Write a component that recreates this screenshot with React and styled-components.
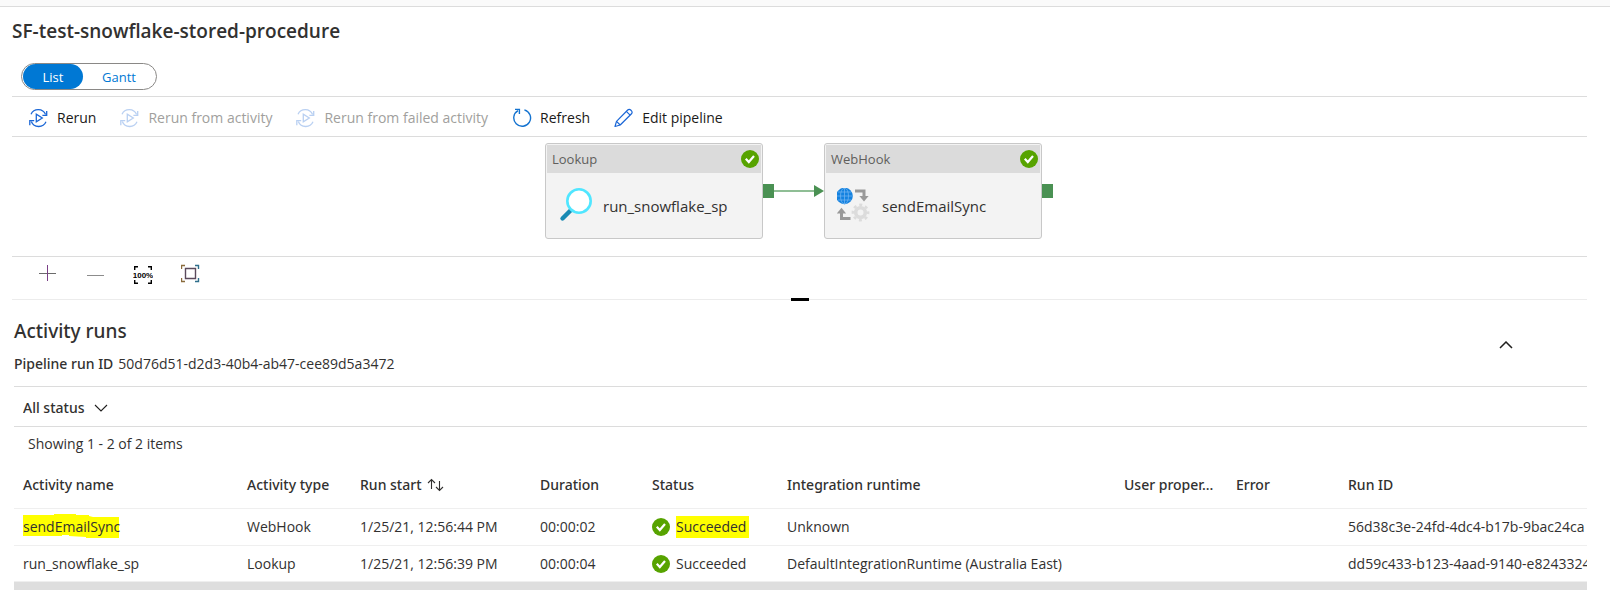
import React from "react";
import styled, { createGlobalStyle } from "styled-components";

const Global = createGlobalStyle`
  *, *::before, *::after { box-sizing: border-box; }
  body {
    margin: 0;
    background: #fff;
    color: #323130;
    font: 14px/20px "Open Sans", "Noto Sans", sans-serif;
  }
  button, select { font: inherit; color: inherit; }
  svg { display: block; flex: none; }
`;

const mediumFont = `
  font-family: "Noto Sans", "Open Sans", sans-serif;
  font-weight: 500;
`;

const TopStrip = styled.div`
  height: 7px;
  background: #fafafa;
  border-bottom: 1px solid #dcdcdc;
`;

const Page = styled.main`
  padding: 0 23px 0 12px;
`;

const Title = styled.h1`
  margin: 0;
  padding: 10px 0 18px;
  font-size: 19px;
  line-height: 28px;
  font-weight: 600;
`;

const ViewSwitch = styled.div`
  display: flex;
  width: 136px;
  height: 27px;
  margin: 0 0 6px 9px;
  padding: 0 1px;
  border: 1px solid #8a8886;
  border-radius: 14px;
`;

const ViewButton = styled.button`
  width: ${(p) => (p.$active ? 60 : 72)}px;
  padding: 0;
  border: 0;
  border-radius: 13px;
  font-size: 13px;
  background: ${(p) => (p.$active ? "#0078d4" : "transparent")};
  color: ${(p) => (p.$active ? "#fff" : "#0078d4")};
`;

const Toolbar = styled.div`
  display: flex;
  align-items: center;
  gap: 24px;
  height: 41px;
  padding: 2px 0 0 17px;
  border: solid #dcdcdc;
  border-width: 1px 0;
`;

const ToolButton = styled.button`
  display: flex;
  align-items: center;
  gap: 8px;
  padding: 0;
  border: 0;
  background: none;
  color: #1b1a19;
  white-space: nowrap;
  &:disabled { color: #a19f9d; }
  &:disabled svg { opacity: 0.3; }
`;

const Canvas = styled.section`
  display: flex;
  justify-content: center;
  align-items: flex-start;
  height: 119px;
  padding: 6px 1px 0 0;
`;

const Node = styled.article`
  width: 218px;
  height: 96px;
  padding: 1px;
  border: 1px solid #c8c8c8;
  border-radius: 3px;
  background: #f3f3f3;
`;

const NodeHeader = styled.header`
  display: flex;
  align-items: center;
  justify-content: space-between;
  height: 28px;
  padding: 0 2px 0 5px;
  background: #dbdbdb;
  color: #605e5c;
  font-size: 13px;
`;

const NodeBody = styled.div`
  display: flex;
  align-items: center;
  gap: 9px;
  height: 64px;
  padding: 2px 0 0 11px;
  font-size: 15px;
`;

const Port = styled.span`
  width: 11px;
  height: 14px;
  margin-top: 41px;
  background: #4a9153;
`;

const Arrow = styled.svg`
  margin-top: 41px;
`;

const ZoomBar = styled.div`
  position: relative;
  display: flex;
  gap: 28px;
  height: 44px;
  padding: 7px 0 0 25px;
  border: solid #dcdcdc;
  border-width: 1px 0;
  border-bottom-color: #ececec;
`;

const ZoomButton = styled.button`
  width: 20px;
  height: 20px;
  padding: 0;
  border: 0;
  background: none;
`;

const SplitHandle = styled.span`
  position: absolute;
  left: 50%;
  bottom: -2px;
  width: 18px;
  height: 3px;
  margin-left: -9px;
  background: #000;
`;

const Runs = styled.section`
  padding-left: 2px;
`;

const RunsHeader = styled.div`
  display: flex;
  justify-content: space-between;
  align-items: center;
  height: 87px;
  padding: 4px 74px 0 0;
  border-bottom: 1px solid #dcdcdc;
`;

const RunsTitle = styled.h2`
  ${mediumFont}
  margin: 0;
  font-size: 19px;
  line-height: 28px;
`;

const RunIdLine = styled.dl`
  display: flex;
  gap: 5px;
  margin: 9px 0 0;
  dt { ${mediumFont} }
  dd { margin: 0; }
`;

const IconButton = styled.button`
  padding: 0;
  border: 0;
  background: none;
`;

const FilterBar = styled.div`
  display: flex;
  align-items: center;
  height: 40px;
  padding: 2px 0 0 9px;
  border-bottom: 1px solid #dcdcdc;
`;

const SelectWrap = styled.label`
  display: grid;
  align-items: center;
  > * { grid-area: 1 / 1; }
  svg { justify-self: end; pointer-events: none; }
`;

const StatusSelect = styled.select`
  appearance: none;
  width: 85px;
  padding: 0;
  border: 0;
  background: none;
  ${mediumFont}
`;

const Count = styled.p`
  margin: 0;
  padding: 7px 0 0 14px;
`;

const TableWrap = styled.div`
  overflow: hidden;
`;

const Table = styled.table`
  width: 100%;
  min-width: 1573px;
  table-layout: fixed;
  border-collapse: separate;
  border-spacing: 0;
`;

const Th = styled.th`
  ${mediumFont}
  width: ${(p) => (p.$w ? `${p.$w}px` : "auto")};
  height: 55px;
  padding: 8px 0 0 9px;
  border-bottom: 1px solid #efefef;
  text-align: left;
  white-space: nowrap;
`;

const Td = styled.td`
  height: ${(p) => (p.$last ? 36 : 37)}px;
  padding: 0 0 0 9px;
  border-bottom: 1px solid #efefef;
  white-space: nowrap;
`;

const Inline = styled.span`
  display: flex;
  align-items: center;
  gap: ${(p) => p.$gap}px;
`;

const Mark = styled.mark`
  padding: 1px 3px 1px 0;
  background: #ff0;
  color: inherit;
`;

const BrushMark = styled.mark`
  position: relative;
  z-index: 0;
  background: none;
  color: inherit;
  &::before {
    content: "";
    position: absolute;
    z-index: -1;
    left: 0;
    top: -3px;
    width: 96px;
    height: 24px;
    background: #ff0;
    clip-path: polygon(0 1px, 31px 1px, 31px 0, 53px 0, 53px 1px, 66px 1px, 66px 2px, 70px 3px, 96px 3px, 96px 24px, 63px 24px, 63px 23px, 46px 22px, 46px 21px, 39px 21px, 39px 22px, 0 22px);
  }
`;

const ScrollTrack = styled.div`
  height: 8px;
  background: #dedede;
`;

const RerunIcon = () => (
  <svg width="20" height="20" viewBox="0 0 20 20" fill="none" stroke="#1a66d6" strokeWidth="1.3">
    <path d="M2 6.2A8 8 0 0 1 16.6 6.5M17 13.8A8 8 0 0 1 2.3 13.5" />
    <path d="M17.7 3v4.4h-4.3M.8 17.2v-4.6h4.4" />
    <path d="M7.3 6.2v7.6l6-3.8z" />
  </svg>
);

const RefreshIcon = () => (
  <svg width="20" height="20" viewBox="0 0 20 20" fill="none" stroke="#1473d0" strokeWidth="1.4">
    <path d="M12.4 1.8A8.4 8.4 0 1 1 6 2.6" />
    <path d="M3 1.4h4.4v4.5" />
  </svg>
);

const PencilIcon = () => (
  <svg width="20" height="20" viewBox="0 0 20 20" fill="none" stroke="#1a66d6" strokeWidth="1.2" strokeLinejoin="round">
    <path d="M1 18.5l1.5-5.2L13.7 2a2.1 2.1 0 0 1 3 0l.8.8a2.1 2.1 0 0 1 0 3L6.2 17z" />
    <path d="M12.3 3.4l3.8 3.8M2.5 13.3l3.7 3.7" />
  </svg>
);

const CheckIcon = () => (
  <svg width="18" height="18" viewBox="0 0 18 18">
    <circle cx="9" cy="9" r="9" fill="#57a300" />
    <path d="M4.8 8.8l3 3.2 5.2-6" fill="none" stroke="#fff" strokeWidth="2.2" />
  </svg>
);

const LookupIcon = () => (
  <svg width="36" height="36" viewBox="0 0 36 36">
    <path d="M13.5 21.5L4.5 30.5" stroke="#198ab3" strokeWidth="4.4" strokeLinecap="round" />
    <circle cx="21" cy="13" r="11.7" fill="#fff" stroke="#50e6ff" strokeWidth="2.6" />
  </svg>
);

const WebHookIcon = () => (
  <svg width="36" height="36" viewBox="2 1 36 36" fill="none">
    <circle cx="9.5" cy="9" r="8.3" fill="#1482e0" />
    <path d="M9.5 1v16M1.4 9h16.2M3 5h13M3 13h13" stroke="#75b8f2" strokeWidth=".7" />
    <ellipse cx="9.5" cy="9" rx="4" ry="8" stroke="#75b8f2" strokeWidth=".7" />
    <path d="M20 4h9v6" stroke="#999" strokeWidth="3" />
    <path d="M24.4 9h9.2L29 14.6z" fill="#999" />
    <path d="M15.5 31.5H6.5v-6" stroke="#999" strokeWidth="3" />
    <path d="M1.9 26.4h9.2L6.5 20.8z" fill="#999" />
    <circle cx="25.5" cy="25.5" r="4.8" stroke="#dcdcdc" strokeWidth="3.6" />
    <circle cx="25.5" cy="25.5" r="7.6" stroke="#dcdcdc" strokeWidth="2.6" strokeDasharray="3 2.97" strokeDashoffset="1.5" />
  </svg>
);

const PlusIcon = () => (
  <svg width="20" height="20" viewBox="0 0 20 20" fill="none">
    <path d="M2 9.5h17" stroke="#6b6b6b" />
    <path d="M10.5 1v16" stroke="#7a3f86" />
  </svg>
);

const MinusIcon = () => (
  <svg width="20" height="20" viewBox="0 0 20 20">
    <path d="M2 11.5h17" stroke="#8c8c8c" />
  </svg>
);

const FullSizeIcon = () => (
  <svg width="20" height="20" viewBox="0 0 20 20" fill="none" stroke="#000" strokeWidth="1.4">
    <path d="M1.7 6V2.7H5M15 2.7h3.3V6M18.3 16v3.3H15M5 19.3H1.7V16" />
    <text x="10" y="14" textAnchor="middle" fontFamily="Liberation Sans, sans-serif" fontSize="8" fontWeight="700" fill="#000" stroke="none">100%</text>
  </svg>
);

const FitIcon = () => (
  <svg width="20" height="20" viewBox="1 0 20 20" fill="none" strokeWidth="1.4">
    <path d="M5.5 4.5h10v10h-10z" stroke="#5b4a5c" />
    <path d="M1.5 5V1.5H5M1.5 14v3.500H5" stroke="#8a6b3c" />
    <path d="M15 1.5h3.5V5M18.5 14v3.500H15" stroke="#2f6f8c" />
  </svg>
);

const Chevron = ({ up }) => (
  <svg width="14" height="8" viewBox="0 0 14 8" fill="none" stroke="#201f1e" strokeWidth={up ? 1.5 : 1.1}>
    <path d={up ? "M1 7l6-6 6 6" : "M1 1l6 6 6-6"} />
  </svg>
);

const SortIcon = () => (
  <svg width="17" height="14" viewBox="0 0 17 14" fill="none" stroke="#323130" strokeWidth="1.1">
    <path d="M4.5 11V1.5M1 5l3.5-3.5L8 5M12.5 3v9.500M9 9l3.5 3.5L16 9" />
  </svg>
);

const columns = [
  ["Activity name", 224],
  ["Activity type", 113],
  ["Run start", 180],
  ["Duration", 112],
  ["Status", 135],
  ["Integration runtime", 337],
  ["User proper...", 112],
  ["Error", 112],
  ["Run ID"],
];

const runs = [
  {
    name: "sendEmailSync", type: "WebHook", start: "1/25/21, 12:56:44 PM", duration: "00:00:02",
    runtime: "Unknown", id: "56d38c3e-24fd-4dc4-b17b-9bac24ca", marked: true,
  },
  {
    name: "run_snowflake_sp", type: "Lookup", start: "1/25/21, 12:56:39 PM", duration: "00:00:04",
    runtime: "DefaultIntegrationRuntime (Australia East)", id: "dd59c433-b123-4aad-9140-e8243324",
  },
];

function ActivityNode({ type, name, icon }) {
  return (
    <Node>
      <NodeHeader>{type}<CheckIcon /></NodeHeader>
      <NodeBody>{icon}{name}</NodeBody>
    </Node>
  );
}

function RunRow({ run, last }) {
  return (
    <tr>
      <Td $last={last}>{run.marked ? <BrushMark>{run.name}</BrushMark> : run.name}</Td>
      <Td $last={last}>{run.type}</Td>
      <Td $last={last}>{run.start}</Td>
      <Td $last={last}>{run.duration}</Td>
      <Td $last={last}>
        <Inline $gap={6}><CheckIcon />{run.marked ? <Mark>Succeeded</Mark> : <span>Succeeded</span>}</Inline>
      </Td>
      <Td $last={last}>{run.runtime}</Td>
      <Td $last={last} />
      <Td $last={last} />
      <Td $last={last}>{run.id}</Td>
    </tr>
  );
}

export default function App() {
  return (
    <>
      <Global />
      <TopStrip />
      <Page>
        <Title>SF-test-snowflake-stored-procedure</Title>
        <ViewSwitch>
          <ViewButton $active aria-pressed="true">List</ViewButton>
          <ViewButton aria-pressed="false">Gantt</ViewButton>
        </ViewSwitch>
        <Toolbar>
          <ToolButton><RerunIcon />Rerun</ToolButton>
          <ToolButton disabled><RerunIcon />Rerun from activity</ToolButton>
          <ToolButton disabled><RerunIcon />Rerun from failed activity</ToolButton>
          <ToolButton><RefreshIcon />Refresh</ToolButton>
          <ToolButton><PencilIcon />Edit pipeline</ToolButton>
        </Toolbar>
        <Canvas>
          <ActivityNode type="Lookup" name="run_snowflake_sp" icon={<LookupIcon />} />
          <Port />
          <Arrow width="50" height="14" viewBox="0 0 50 14">
            <path d="M0 7h41" stroke="#6aa872" strokeWidth="1.6" />
            <path d="M40 1l10 6-10 6z" fill="#4a9153" />
          </Arrow>
          <ActivityNode type="WebHook" name="sendEmailSync" icon={<WebHookIcon />} />
          <Port />
        </Canvas>
        <ZoomBar>
          <ZoomButton aria-label="Zoom in"><PlusIcon /></ZoomButton>
          <ZoomButton aria-label="Zoom out"><MinusIcon /></ZoomButton>
          <ZoomButton aria-label="Actual size"><FullSizeIcon /></ZoomButton>
          <ZoomButton aria-label="Zoom to fit"><FitIcon /></ZoomButton>
          <SplitHandle />
        </ZoomBar>
        <Runs>
          <RunsHeader>
            <div>
              <RunsTitle>Activity runs</RunsTitle>
              <RunIdLine>
                <dt>Pipeline run ID</dt>
                <dd>50d76d51-d2d3-40b4-ab47-cee89d5a3472</dd>
              </RunIdLine>
            </div>
            <IconButton aria-label="Collapse"><Chevron up /></IconButton>
          </RunsHeader>
          <FilterBar>
            <SelectWrap>
              <StatusSelect aria-label="Status filter"><option>All status</option></StatusSelect>
              <Chevron />
            </SelectWrap>
          </FilterBar>
          <Count>Showing 1 - 2 of 2 items</Count>
          <TableWrap>
            <Table>
              <thead>
                <tr>
                  {columns.map(([label, width]) => (
                    <Th key={label} $w={width}>
                      {label === "Run start" ? <Inline $gap={5}>{label}<SortIcon /></Inline> : label}
                    </Th>
                  ))}
                </tr>
              </thead>
              <tbody>
                {runs.map((run, i) => <RunRow key={run.name} run={run} last={i === runs.length - 1} />)}
              </tbody>
            </Table>
          </TableWrap>
          <ScrollTrack />
        </Runs>
      </Page>
    </>
  );
}
